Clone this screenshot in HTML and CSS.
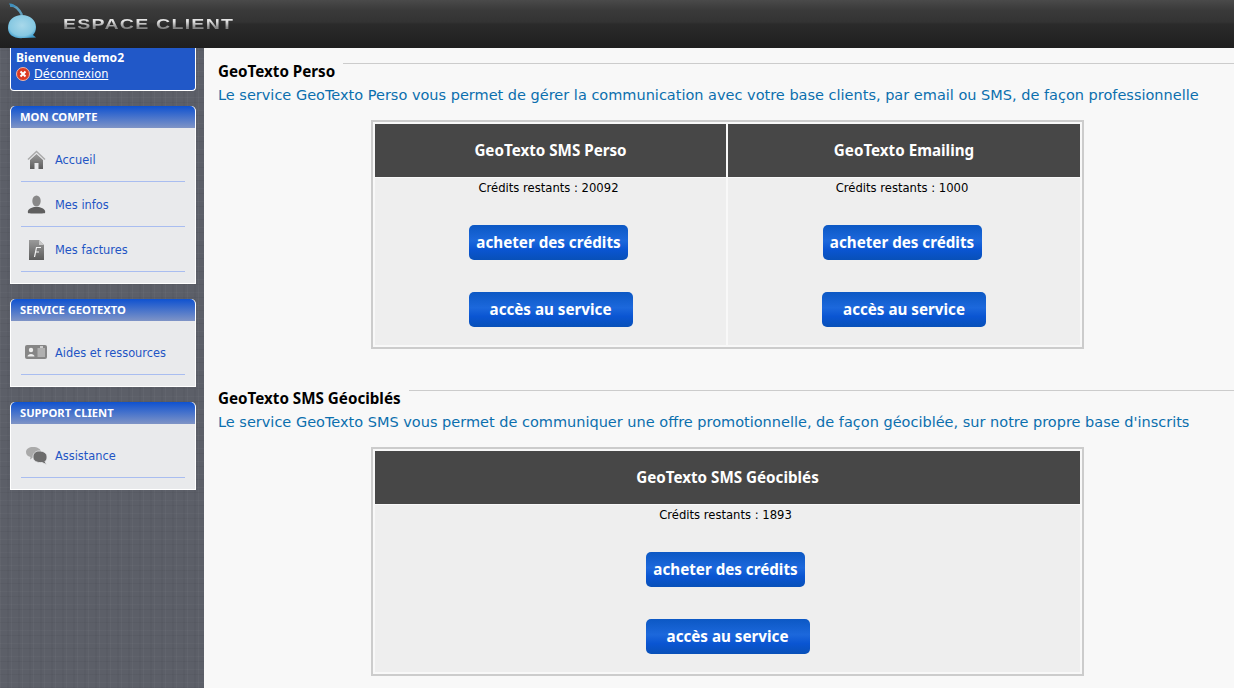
FILE: index.html
```html
<!DOCTYPE html>
<html lang="fr">
<head>
    <meta charset="UTF-8">
    <title>Espace client</title>
    <link rel="stylesheet" href="styles.css">
</head>
<body>
    <header class="topbar">
        <svg class="logo" width="40" height="48" viewBox="0 0 40 48">
            <defs>
                <radialGradient id="drop" cx="0.5" cy="0.45" r="0.6">
                    <stop offset="0" stop-color="#a8d8ea"/>
                    <stop offset="0.75" stop-color="#86c8e2"/>
                    <stop offset="1" stop-color="#3d9dcf"/>
                </radialGradient>
                <linearGradient id="grey" x1="0" y1="0" x2="0" y2="1">
                    <stop offset="0" stop-color="#9a9a9a"/>
                    <stop offset="1" stop-color="#5c5c5c"/>
                </linearGradient>
            </defs>
            <path d="M10 5.500C15 5 19 9 22 15" fill="none" stroke="#5f9dbb" stroke-width="2.500"/>
            <path d="M9 3.500C12 3 15 5 16 7L11 7z" fill="#3f8fbc"/>
            <path d="M8 28C8 20 14 15 22 15C30 15 36 20 36 27C36 30 35 33 33 35L36 37.500L24 38C14 39 8 35 8 28z" fill="url(#drop)"/>
        </svg>
        <span class="brand">ESPACE CLIENT</span>
    </header>

    <div class="page">
        <aside class="sidebar">
            <div class="welcome">
                <strong>Bienvenue demo2</strong>
                <div class="logout">
                    <svg width="14" height="14" viewBox="0 0 14 14">
                        <circle cx="7" cy="7" r="6.500" fill="#dd3a22" stroke="#f0b8a8"/>
                        <path d="M4.500 4.500l5 5M9.500 4.500l-5 5" stroke="#fff" stroke-width="2"/>
                    </svg>
                    <a href="#">Déconnexion</a>
                </div>
            </div>

            <section class="panel">
                <h3>MON COMPTE</h3>
                <ul>
                    <li>
                        <svg class="ico" width="22" height="20" viewBox="0 0 22 20">
                            <path d="M3 9.500L11.500 1.500 20 9.500" fill="none" stroke="#aaa" stroke-width="1.500"/>
                            <path d="M5 10l6.500-6 6.500 6v9h-4.500v-6h-4v6H5z" fill="url(#grey)"/>
                        </svg>
                        <a href="#">Accueil</a>
                    </li>
                    <li>
                        <svg class="ico" width="22" height="20" viewBox="0 0 22 20">
                            <ellipse cx="11.500" cy="6" rx="4.200" ry="5.500" fill="#888"/>
                            <path d="M3 18c-1-3 2-5 6-6h5c4 1 7 3 6 6-1 .8-16 .8-17 0z" fill="#5f5f5f"/>
                        </svg>
                        <a href="#">Mes infos</a>
                    </li>
                    <li>
                        <svg class="ico" width="22" height="20" viewBox="0 0 22 20">
                            <path d="M4 0h10l5 5v15H4z" fill="url(#grey)"/>
                            <path d="M14 0l5 5h-5z" fill="#c8c8c8"/>
                            <path d="M9.500 17l2-9.500h4.500M10.500 12h3.500" fill="none" stroke="#f2f2f2" stroke-width="1.200"/>
                        </svg>
                        <a href="#">Mes factures</a>
                    </li>
                </ul>
            </section>

            <section class="panel">
                <h3>SERVICE GEOTEXTO</h3>
                <ul>
                    <li>
                        <svg class="ico" width="22" height="20" viewBox="0 0 22 20">
                            <rect y="2" width="22" height="14" rx="2" fill="#868686"/>
                            <circle cx="6" cy="7" r="2.200" fill="#eee"/>
                            <path d="M2.500 13.500c0-3.500 7-3.500 7 0z" fill="#eee"/>
                            <rect x="12.500" y="5" width="7.500" height="9" fill="#b0b0b0"/>
                            <rect x="15" y="3" width="3" height="2" fill="#ccc"/>
                        </svg>
                        <a href="#">Aides et ressources</a>
                    </li>
                </ul>
            </section>

            <section class="panel">
                <h3>SUPPORT CLIENT</h3>
                <ul>
                    <li>
                        <svg class="ico" width="22" height="20" viewBox="0 0 22 20">
                            <path d="M8 1c4.500 0 8 2 8 5s-3 5.500-8 5.500l-3 2 .5-2.500C2.500 10.500 1 8.500 1 6c0-3 3-5 7-5z" fill="#aaa"/>
                            <path d="M14 5c5 0 8 2.500 8 6 0 2-.8 3.500-2 4.500l1.500 3-4.500-2c-5 .5-9-1.500-9-5.500 0-3.500 2.500-6 6-6z" fill="#6c6c6c" stroke="#e9eaec" stroke-width=".8"/>
                        </svg>
                        <a href="#">Assistance</a>
                    </li>
                </ul>
            </section>
        </aside>

        <main class="content">
            <fieldset class="service">
                <legend>GeoTexto Perso</legend>
                <p class="intro">Le service GeoTexto Perso vous permet de gérer la communication avec votre base clients, par email ou SMS, de façon professionnelle</p>
                <div class="credits two">
                    <div class="col">
                        <div class="col-head">GeoTexto SMS Perso</div>
                        <div class="col-body">
                            <p>Crédits restants : 20092</p>
                            <a class="btn buy" href="#">acheter des crédits</a>
                            <a class="btn" href="#">accès au service</a>
                        </div>
                    </div>
                    <div class="col">
                        <div class="col-head">GeoTexto Emailing</div>
                        <div class="col-body">
                            <p>Crédits restants : 1000</p>
                            <a class="btn buy" href="#">acheter des crédits</a>
                            <a class="btn" href="#">accès au service</a>
                        </div>
                    </div>
                </div>
            </fieldset>

            <fieldset class="service">
                <legend>GeoTexto SMS Géociblés</legend>
                <p class="intro">Le service GeoTexto SMS vous permet de communiquer une offre promotionnelle, de façon géociblée, sur notre propre base d'inscrits</p>
                <div class="credits">
                    <div class="col">
                        <div class="col-head">GeoTexto SMS Géociblés</div>
                        <div class="col-body">
                            <p>Crédits restants : 1893</p>
                            <a class="btn buy" href="#">acheter des crédits</a>
                            <a class="btn" href="#">accès au service</a>
                        </div>
                    </div>
                </div>
            </fieldset>
        </main>
    </div>
</body>
</html>
```

FILE: styles.css
```css
html, body {
    margin: 0;
    height: 688px;
    overflow: hidden;
}
body {
    font-family: "DejaVu Sans", Verdana, sans-serif;
    font-size: 12px;
    background: #f8f8f8;
}
a {
    color: #1f55c4;
    text-decoration: none;
}

/* top bar */
.topbar {
    height: 48px;
    display: flex;
    align-items: center;
    background: linear-gradient(#4a4a4a 0, #3a3a3a 10px, #333 22px, #2b2b2b 24px, #1f1f1f 48px);
}
.logo {
    flex: none;
}
.brand {
    margin-left: 23px;
    font-family: "Liberation Sans", Arial, sans-serif;
    font-size: 15.500px;
    font-weight: bold;
    letter-spacing: 1px;
    transform: scaleX(1.260);
    transform-origin: left center;
    background: linear-gradient(#e4e4e4 35%, #868686 70%);
    -webkit-background-clip: text;
    background-clip: text;
    color: transparent;
}

.page {
    display: flex;
    height: 640px;
}

/* left column */
.sidebar {
    width: 204px;
    flex: none;
    box-sizing: border-box;
    padding: 0 8px 0 10px;
    background-color: #5c5f68;
    background-image:
        repeating-linear-gradient(90deg, rgba(255,255,255,.03) 0 1px, transparent 1px 7px, rgba(0,0,0,.03) 7px 9px, transparent 9px 11px),
        repeating-linear-gradient(0deg, rgba(0,0,0,.04) 0 1px, transparent 1px 5px, rgba(255,255,255,.025) 5px 6px, transparent 6px 13px);
}
.welcome {
    height: 43px;
    box-sizing: border-box;
    padding: 2px 0 0 5px;
    margin-bottom: 15px;
    color: #fff;
    background: #2158c8;
    border: 1px solid #fff;
    border-top: 0;
    border-radius: 0 0 4px 4px;
    line-height: 16px;
}
.welcome strong {
    display: block;
    font-family: "Noto Sans", sans-serif;
    font-size: 12.100px;
}
.logout {
    display: flex;
    align-items: center;
    gap: 4px;
}
.logout a {
    color: #fff;
    font-size: 11.400px;
    text-decoration: underline;
}
.panel {
    margin-bottom: 15px;
    background: #e9eaec;
    border: 1px solid #fff;
    border-top: 0;
    border-radius: 5px 5px 0 0;
    padding-bottom: 11px;
}
.panel h3 {
    margin: 0;
    height: 22px;
    padding-left: 9px;
    line-height: 22px;
    font-family: "Noto Sans", sans-serif;
    font-size: 11.200px;
    font-weight: bold;
    color: #fff;
    border-radius: 5px 5px 0 0;
    background: linear-gradient(#0f52d0, #7f94c6);
}
.panel ul {
    list-style: none;
    margin: 9px 10px 0;
    padding: 0;
}
.panel li {
    height: 43px;
    padding: 1px 0 0 4px;
    display: flex;
    align-items: center;
    border-bottom: 1px solid #a9bdf0;
}
.panel li a {
    font-size: 11.400px;
}
.ico {
    flex: none;
    margin-right: 8px;
}

/* right column */
.content {
    flex: 1;
    min-width: 0;
}
.service {
    margin: -1px 0 0 14px;
    padding: 0;
    border: 0;
    border-top: 1px solid #ccc;
}
.service + .service {
    margin-top: 25px;
}
.service legend {
    padding: 16px 8px 0 0;
    font-family: "Noto Sans", sans-serif;
    font-size: 15.200px;
    font-weight: bold;
    color: #000;
    line-height: 16px;
}
.intro {
    margin: 6px 0 0;
    font-size: 14.500px;
    line-height: 20px;
    color: #0b6fae;
}
.credits {
    display: flex;
    gap: 2px;
    width: 705px;
    margin: 15px 0 0 153px;
    padding: 2px;
    background: #f8f8f8;
    border: 2px solid #ccc;
}
.col {
    flex: 1;
}
.two .col:first-child {
    flex: none;
    width: 351px;
}
.col-head {
    height: 53px;
    line-height: 53px;
    text-align: center;
    font-family: "Noto Sans", sans-serif;
    font-size: 15.200px;
    font-weight: bold;
    color: #fff;
    background: #474747;
}
.col-body {
    height: 167px;
    margin-top: 1px;
    display: flex;
    flex-direction: column;
    align-items: center;
    background: #eee;
}
.col-body p {
    margin: 3px 4px 0 0;
    font-size: 11.600px;
    line-height: 15px;
    color: #000;
}
.btn {
    display: block;
    box-sizing: border-box;
    width: 164px;
    height: 35px;
    line-height: 35px;
    margin-bottom: 32px;
    border-radius: 5px;
    text-align: center;
    font-family: "Noto Sans", sans-serif;
    font-size: 15.200px;
    font-weight: bold;
    color: #fff;
    background: linear-gradient(#0c58c4 0, #1c68dc 45%, #0a55d2 70%, #0850b8 100%);
}
.btn.buy {
    width: 159px;
    margin-top: 29px;
    margin-right: 4px;
}
```
